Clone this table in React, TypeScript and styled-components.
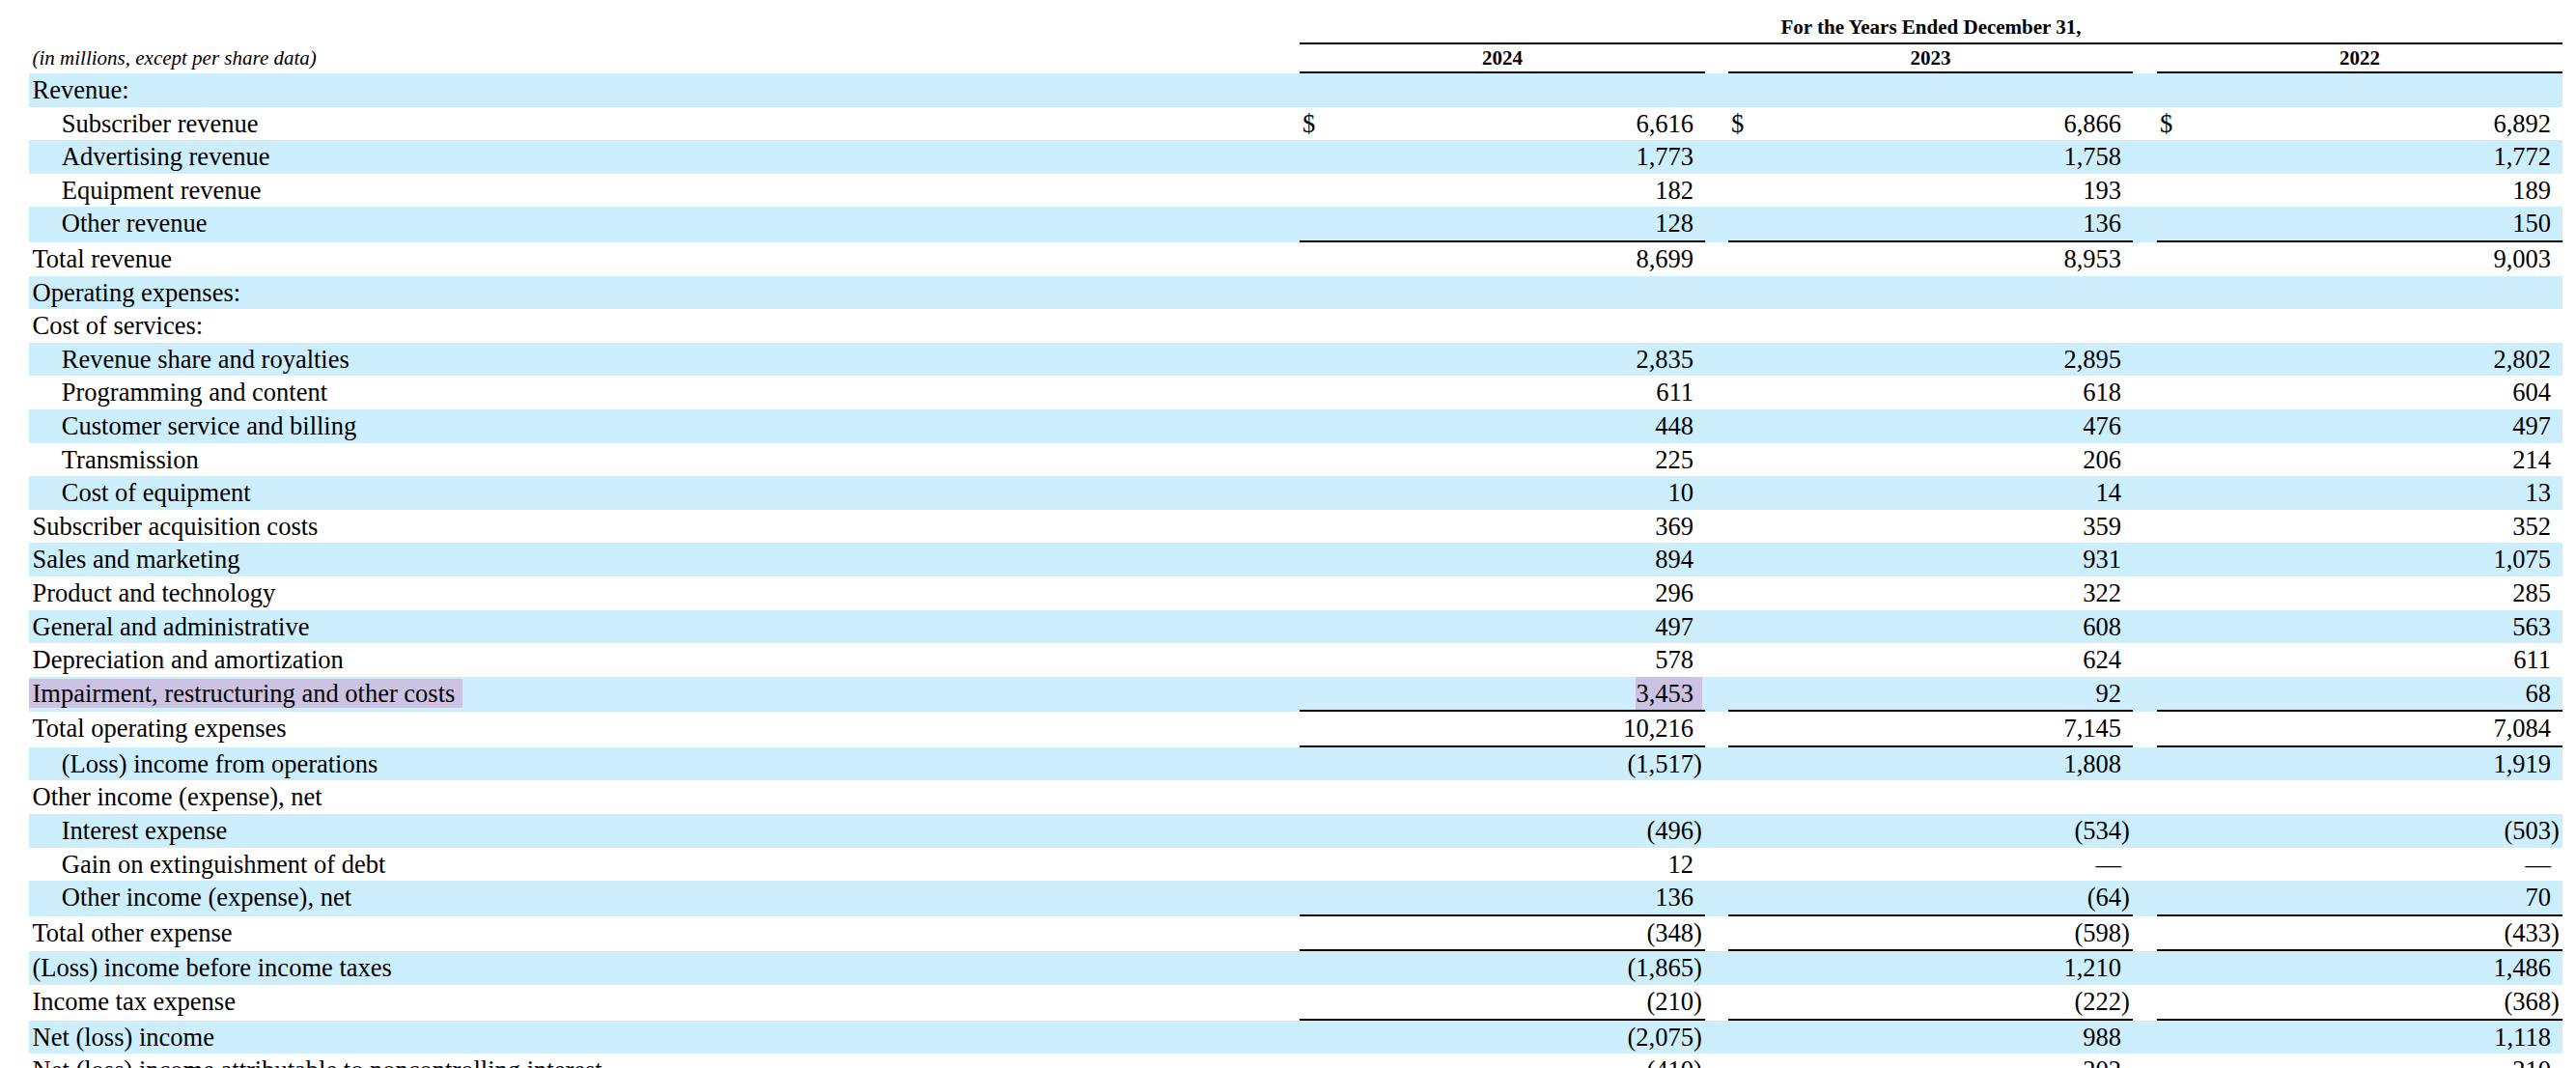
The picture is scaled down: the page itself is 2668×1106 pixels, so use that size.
import React from "react";
import styled, { createGlobalStyle } from "styled-components";

const COLS = "1316px 420px 24px 419px 25px 420px";
const SHADE = "#cdeefd";
const MARK = "#cbc2e4";

const GlobalStyle = createGlobalStyle`
  html, body {
    margin: 0;
    padding: 0;
    background: #ffffff;
    overflow: hidden;
  }
  body {
    font-family: "Liberation Serif", "Times New Roman", serif;
    color: #000000;
  }
`;

const Page = styled.div`
  width: 2668px;
  box-sizing: border-box;
  padding: 0 14px 0 30px;
`;

const HeadGrid = styled.div`
  display: grid;
  grid-template-columns: ${COLS};
  font-size: 21px;
  font-weight: 700;
`;

const Title = styled.div`
  grid-column: 2 / 7;
  text-align: center;
  line-height: 24px;
  padding: 16px 0 4px;
  border-bottom: 2px solid #000;
`;

const UnitsNote = styled.div`
  font-style: italic;
  font-weight: 400;
  line-height: 28px;
  padding-left: 3.5px;
  white-space: nowrap;
`;

const YearCell = styled.div`
  text-align: center;
  line-height: 28px;
  border-bottom: 2px solid #000;
`;

const Blank = styled.div``;

const Row = styled.div<{ $shaded: boolean }>`
  display: grid;
  grid-template-columns: ${COLS};
  font-size: 26.5px;
  line-height: 34.6px;
  background: ${(p) => (p.$shaded ? SHADE : "transparent")};
`;

const Label = styled.div<{ $level: number }>`
  padding-left: ${(p) => (p.$level ? 33.8 : 3.5)}px;
  white-space: nowrap;
`;

const Marked = styled.span`
  background: ${MARK};
  margin-left: -3.5px;
  padding: 0 8px 0 3.5px;
`;

const NumCell = styled.div<{ $rule: boolean }>`
  display: flex;
  justify-content: space-between;
  align-items: flex-start;
  padding: 0 3px;
  border-bottom: ${(p) => (p.$rule ? "2px solid #000" : "none")};
`;

const Dollar = styled.span``;

const Amount = styled.span<{ $mark: boolean }>`
  display: inline-flex;
  white-space: nowrap;
  background: ${(p) => (p.$mark ? MARK : "transparent")};
`;

const Paren = styled.span`
  display: inline-block;
  width: 9px;
  text-align: left;
`;

type Line = {
  label: string;
  level: 0 | 1;
  values?: [string, string, string];
  dollar?: boolean;
  rule?: boolean;
  mark?: boolean;
};

const LINES: Line[] = [
  { label: "Revenue:", level: 0 },
  { label: "Subscriber revenue", level: 1, values: ["6,616", "6,866", "6,892"], dollar: true },
  { label: "Advertising revenue", level: 1, values: ["1,773", "1,758", "1,772"] },
  { label: "Equipment revenue", level: 1, values: ["182", "193", "189"] },
  { label: "Other revenue", level: 1, values: ["128", "136", "150"], rule: true },
  { label: "Total revenue", level: 0, values: ["8,699", "8,953", "9,003"] },
  { label: "Operating expenses:", level: 0 },
  { label: "Cost of services:", level: 0 },
  { label: "Revenue share and royalties", level: 1, values: ["2,835", "2,895", "2,802"] },
  { label: "Programming and content", level: 1, values: ["611", "618", "604"] },
  { label: "Customer service and billing", level: 1, values: ["448", "476", "497"] },
  { label: "Transmission", level: 1, values: ["225", "206", "214"] },
  { label: "Cost of equipment", level: 1, values: ["10", "14", "13"] },
  { label: "Subscriber acquisition costs", level: 0, values: ["369", "359", "352"] },
  { label: "Sales and marketing", level: 0, values: ["894", "931", "1,075"] },
  { label: "Product and technology", level: 0, values: ["296", "322", "285"] },
  { label: "General and administrative", level: 0, values: ["497", "608", "563"] },
  { label: "Depreciation and amortization", level: 0, values: ["578", "624", "611"] },
  { label: "Impairment, restructuring and other costs", level: 0, values: ["3,453", "92", "68"], rule: true, mark: true },
  { label: "Total operating expenses", level: 0, values: ["10,216", "7,145", "7,084"], rule: true },
  { label: "(Loss) income from operations", level: 1, values: ["(1,517)", "1,808", "1,919"] },
  { label: "Other income (expense), net", level: 0 },
  { label: "Interest expense", level: 1, values: ["(496)", "(534)", "(503)"] },
  { label: "Gain on extinguishment of debt", level: 1, values: ["12", "—", "—"] },
  { label: "Other income (expense), net", level: 1, values: ["136", "(64)", "70"], rule: true },
  { label: "Total other expense", level: 0, values: ["(348)", "(598)", "(433)"], rule: true },
  { label: "(Loss) income before income taxes", level: 0, values: ["(1,865)", "1,210", "1,486"] },
  { label: "Income tax expense", level: 0, values: ["(210)", "(222)", "(368)"], rule: true },
  { label: "Net (loss) income", level: 0, values: ["(2,075)", "988", "1,118"] },
  { label: "Net (loss) income attributable to noncontrolling interest", level: 0, values: ["(410)", "202", "210"] },
];

function Figure({ value, dollar, rule, mark }: { value?: string; dollar?: boolean; rule: boolean; mark: boolean }) {
  const negative = !!value && value.startsWith("(");
  const body = negative ? value!.slice(0, -1) : value;
  return (
    <NumCell $rule={rule}>
      <Dollar>{dollar ? "$" : ""}</Dollar>
      {value !== undefined && (
        <Amount $mark={mark}>
          {body}
          <Paren>{negative ? ")" : ""}</Paren>
        </Amount>
      )}
    </NumCell>
  );
}

export default function App() {
  return (
    <>
      <GlobalStyle />
      <Page>
        <HeadGrid>
          <Blank />
          <Title>For the Years Ended December 31,</Title>
          <UnitsNote>(in millions, except per share data)</UnitsNote>
          <YearCell>2024</YearCell>
          <Blank />
          <YearCell>2023</YearCell>
          <Blank />
          <YearCell>2022</YearCell>
        </HeadGrid>
        {LINES.map((line, i) => {
          const rule = !!line.rule;
          return (
            <Row key={i} $shaded={i % 2 === 0}>
              <Label $level={line.level}>
                {line.mark ? <Marked>{line.label}</Marked> : line.label}
              </Label>
              <Figure value={line.values?.[0]} dollar={line.dollar} rule={rule} mark={!!line.mark} />
              <Blank />
              <Figure value={line.values?.[1]} dollar={line.dollar} rule={rule} mark={false} />
              <Blank />
              <Figure value={line.values?.[2]} dollar={line.dollar} rule={rule} mark={false} />
            </Row>
          );
        })}
      </Page>
    </>
  );
}
